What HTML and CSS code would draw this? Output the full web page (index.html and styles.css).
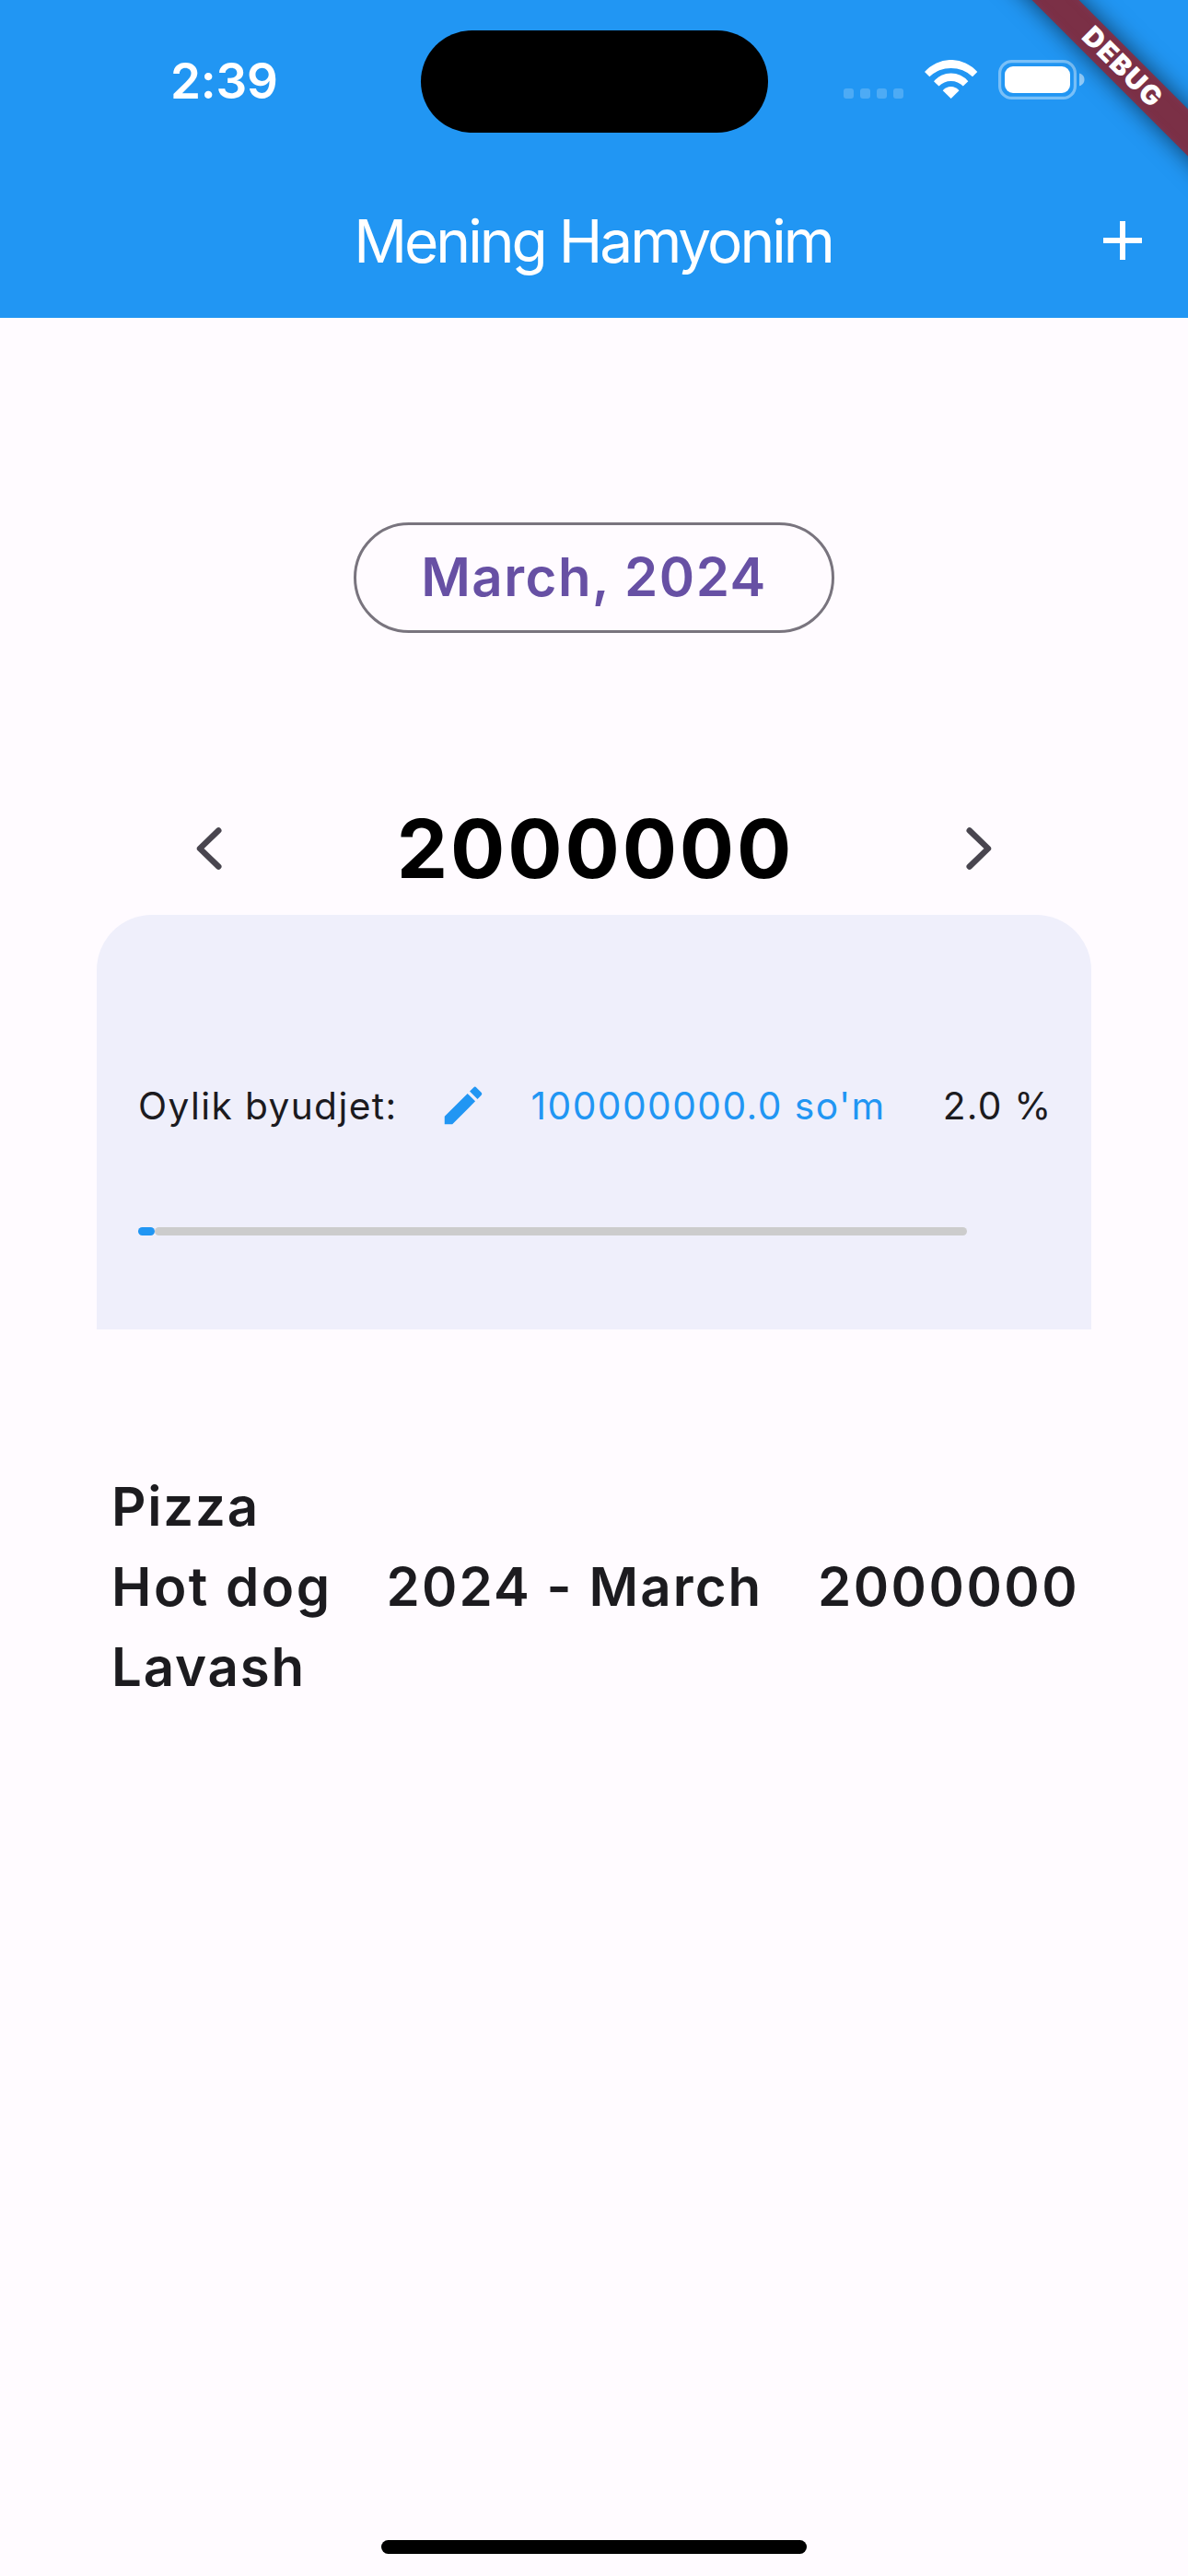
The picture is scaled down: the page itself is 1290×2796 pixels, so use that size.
FILE: index.html
```html
<!DOCTYPE html>
<html lang="uz">
<head>
  <meta charset="utf-8">
  <title>Mening Hamyonim</title>
  <link rel="stylesheet" href="styles.css">
</head>
<body>
  <header class="header">
    <div class="status">
      <span class="time">2:39</span>
      <span class="island"></span>
      <span class="signal"><i></i><i></i><i></i><i></i></span>
      <svg class="wifi" width="58" height="43" viewBox="0 0 58 43" fill="#fff">
        <path d="M0 13A38 38 0 0 1 57.3 13L52 18.3A33.8 33.8 0 0 0 5.3 18.3Z"/>
        <path d="M10 23.3A24.2 24.2 0 0 1 47.3 23.3L41.8 28.6A18 18 0 0 0 15.5 28.6Z"/>
        <path d="M19.7 33.3A11.4 11.4 0 0 1 37.5 33.3L28.65 42.1Z"/>
      </svg>
      <svg class="battery" width="94" height="43" viewBox="0 0 94 43">
        <rect x="1.6" y="1.6" width="81.8" height="39.8" rx="13" fill="none" stroke="#fff" stroke-opacity=".4" stroke-width="3.2"/>
        <rect x="7" y="7" width="71" height="29" rx="9" fill="#fff"/>
        <path d="M88 14.6C91.5 15.5 93.5 18.3 93.5 21.4C93.5 24.5 91.5 27.3 88 28.2Z" fill="#fff" fill-opacity=".5"/>
      </svg>
    </div>
    <div class="appbar">
      <h1 class="title">Mening Hamyonim</h1>
      <svg class="add" width="42" height="42" viewBox="0 0 42 42" fill="#fff">
        <path d="M18 0h6v18h18v6H24v18h-6V24H0v-6h18z"/>
      </svg>
    </div>
    <div class="ribbon"><span class="band">DEBUG</span></div>
  </header>

  <main class="content">
    <button class="month">March, 2024</button>

    <div class="total">
      <svg width="72" height="72" viewBox="0 0 72 72" class="chevron"><path d="M46.3 16.4L26 36L46.3 55.6"/></svg>
      <span class="sum">2000000</span>
      <svg width="72" height="72" viewBox="0 0 72 72" class="chevron"><path d="M25.7 16.4L46 36L25.7 55.6"/></svg>
    </div>

    <section class="card">
      <div class="budget">
        <span class="label">Oylik byudjet:</span>
        <svg class="edit" width="54" height="54" viewBox="0 0 24 24" fill="#2196f3">
          <path d="M3 17.25V21h3.75L17.81 9.94l-3.75-3.75L3 17.25zM20.71 7.04c.39-.39.39-1.02 0-1.41l-2.34-2.34a.996.996 0 0 0-1.41 0l-1.83 1.83 3.75 3.75z"/>
        </svg>
        <span class="limit">100000000.0 so'm</span>
        <span class="percent">2.0 %</span>
      </div>
      <div class="progress">
        <span class="done" style="width: 2%"></span>
        <span class="left"></span>
      </div>
    </section>

    <section class="expense">
      <div class="names">
        <div>Pizza</div>
        <div class="wide">Hot dog</div>
        <div>Lavash</div>
      </div>
      <div class="date">2024 - March</div>
      <div class="price">2000000</div>
    </section>
  </main>

  <div class="home"></div>
</body>
</html>
```
FILE: styles.css
```css
* {
  box-sizing: border-box;
}

body {
  margin: 0;
  width: 1290px;
  height: 2796px;
  display: flex;
  flex-direction: column;
  background: #fffbff;
  color: #1c1b1f;
  font-family: Inter, "Liberation Sans", sans-serif;
  overflow: hidden;
}

svg {
  display: block;
  flex: none;
}

.header {
  position: relative;
  height: 345px;
  background: #2196f3;
  color: #fff;
}

.status {
  display: flex;
  align-items: flex-start;
  height: 177px;
}

.time {
  width: 457px;
  padding-left: 185px;
  font-size: 53px;
  font-weight: 600;
  line-height: 176px;
  letter-spacing: -0.2px;
}

.island {
  width: 377px;
  height: 111px;
  margin: 33px -1px 0 0;
  border-radius: 56px;
  background: #000;
}

.signal {
  display: flex;
  gap: 7px;
  margin: 96px 0 0 83px;
}

.signal i {
  width: 11px;
  height: 11px;
  border-radius: 3px;
  background: rgba(255, 255, 255, 0.2);
}

.wifi {
  margin: 65px 0 0 23px;
}

.battery {
  margin: 65px 0 0 22px;
}

.appbar {
  display: grid;
  grid-template-columns: 92px 1fr 92px;
  align-items: center;
  height: 168px;
}

.title {
  grid-column: 2;
  margin: 0;
  padding: 1px 2px 0 0;
  font-size: 64px;
  font-weight: 400;
  line-height: 80px;
  letter-spacing: -3px;
  text-align: center;
}

.ribbon {
  position: absolute;
  top: 0;
  right: 0;
  width: 240px;
  height: 240px;
  overflow: hidden;
}

.band {
  position: absolute;
  left: -12px;
  top: 54px;
  width: 360px;
  height: 36px;
  padding-left: 3px;
  background: #7b3046;
  box-shadow: 0 0 26px rgba(0, 0, 0, 0.6), inset 0 0 10px rgba(130, 66, 100, 0.45);
  font-size: 29.5px;
  font-weight: 900;
  line-height: 34px;
  letter-spacing: 1.4px;
  text-align: center;
  transform: rotate(45deg);
}

.content {
  display: flex;
  flex-direction: column;
  align-items: center;
  flex: 1;
}

.month {
  width: 522px;
  height: 120px;
  margin-top: 222px;
  padding: 0 0 2px;
  border: 3px solid #79747e;
  border-radius: 60px;
  background: none;
  color: #6750a4;
  font: 600 58.2px/110px Inter, "Liberation Sans", sans-serif;
  letter-spacing: 1.5px;
}

.total {
  display: flex;
  align-items: center;
  justify-content: space-between;
  width: 909px;
  height: 144px;
  margin-top: 162px;
}

.chevron {
  fill: none;
  stroke: #49454f;
  stroke-width: 6.4;
  stroke-linecap: round;
  stroke-linejoin: round;
}

.sum {
  padding-left: 3px;
  color: #000;
  font-size: 88px;
  font-weight: 700;
  letter-spacing: 2.88px;
}

.card {
  width: 1080px;
  height: 450px;
  padding: 180px 45px 0;
  border-radius: 60px 60px 0 0;
  background: #efeffb;
}

.budget {
  display: flex;
  align-items: center;
  height: 54px;
  font-size: 40.7px;
  line-height: 54px;
  white-space: nowrap;
}

.label,
.limit,
.percent {
  padding-top: 2px;
}

.label {
  letter-spacing: 1.38px;
}

.edit {
  margin: 0 47px 0 44px;
}

.limit {
  color: #2196f3;
  letter-spacing: 1.46px;
}

.percent {
  margin-left: 62px;
  letter-spacing: 1.22px;
}

.progress {
  display: flex;
  width: 900px;
  height: 9px;
  margin-top: 105px;
}

.done,
.left {
  border-radius: 5px;
}

.done {
  background: #2196f3;
}

.left {
  flex: 1;
  background: #ccc;
}

.expense {
  display: grid;
  grid-template-columns: 298.6px 468.4px auto;
  align-items: center;
  width: 1048px;
  margin: 149px 0 0;
  font-size: 58.2px;
  font-weight: 600;
  line-height: 87px;
  letter-spacing: 1.8px;
  white-space: nowrap;
}

.wide {
  letter-spacing: 2.5px;
}

.date {
  letter-spacing: 2.1px;
}

.price {
  letter-spacing: 2.5px;
}

.home {
  align-self: center;
  width: 462px;
  height: 15px;
  margin-bottom: 24px;
  border-radius: 8px;
  background: #000;
}
```
